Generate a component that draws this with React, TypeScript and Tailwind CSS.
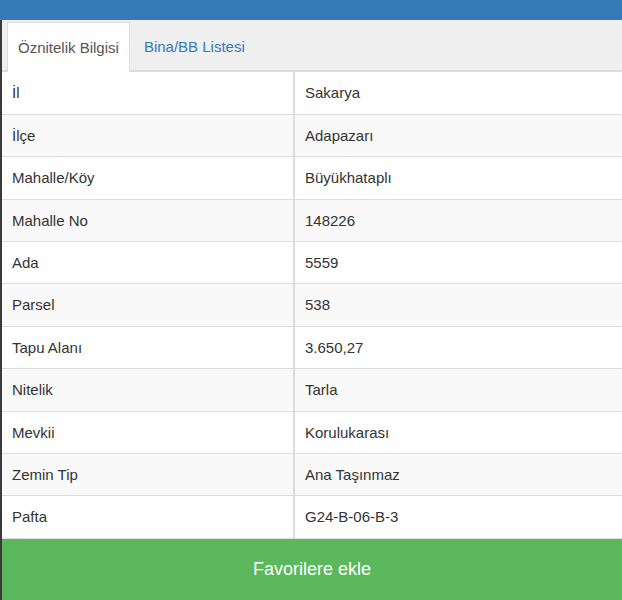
import React from 'react';

const rows: [string, string][] = [
  ['İl', 'Sakarya'],
  ['İlçe', 'Adapazarı'],
  ['Mahalle/Köy', 'Büyükhataplı'],
  ['Mahalle No', '148226'],
  ['Ada', '5559'],
  ['Parsel', '538'],
  ['Tapu Alanı', '3.650,27'],
  ['Nitelik', 'Tarla'],
  ['Mevkii', 'Korulukarası'],
  ['Zemin Tip', 'Ana Taşınmaz'],
  ['Pafta', 'G24-B-06-B-3'],
];

export default function App() {
  return (
    <div className="w-[622px] h-[600px] overflow-hidden bg-white text-[15px] text-[#333] font-['Liberation_Sans',Arial,sans-serif]">
      {/* header bar */}
      <div className="h-[20px] bg-[#337ab7]" />

      <div className="flex h-[580px] border-l-2 border-[#3a3a3a]">
        <div className="flex flex-1 flex-col">
          {/* tabs */}
          <div className="flex h-[52px] items-end bg-[#efefef] pl-[5px] border-b-2 border-[#ddd]">
            <div className="-mb-[2px] flex h-[50px] items-center border border-b-0 border-[#ddd] bg-white px-[10px] pt-[1px] text-[#555]">
              Öznitelik Bilgisi
            </div>
            <div className="flex h-[48px] items-center px-[14px] pt-[2px] text-[#337ab7]">
              Bina/BB Listesi
            </div>
          </div>

          {/* attribute table */}
          <table className="w-full border-collapse">
            <tbody>
              {rows.map(([k, v], i) => (
                <tr
                  key={k}
                  className={`h-[42.4px] border-b border-[#ddd] ${i % 2 === 1 ? 'bg-[#f9f9f9]' : 'bg-white'}`}
                >
                  <td className="w-[292px] border-r-2 border-[#ddd] pl-[10px] pt-[1px] align-middle">{k}</td>
                  <td className="pl-[10px] pt-[1px] align-middle">{v}</td>
                </tr>
              ))}
            </tbody>
          </table>

          <button className="flex flex-1 items-center justify-center bg-[#5cb85c] text-[18px] text-white">
            Favorilere ekle
          </button>
        </div>
      </div>
    </div>
  );
}
